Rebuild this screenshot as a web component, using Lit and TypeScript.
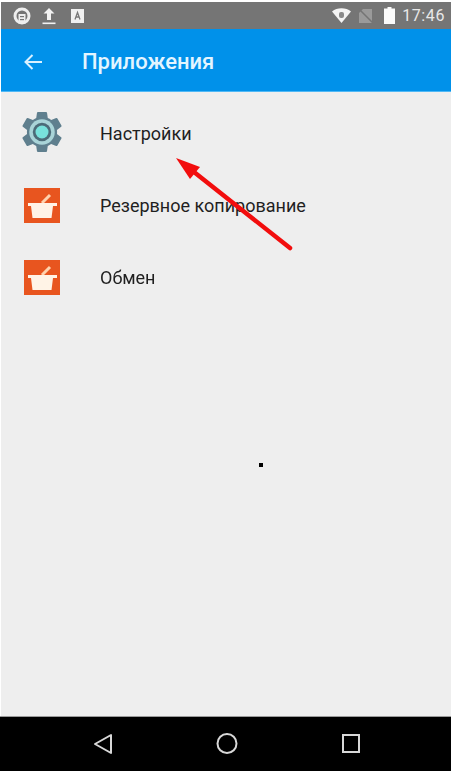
import { LitElement, html, css, svg } from "lit";
import { customElement } from "lit/decorators.js";

const gear = html`<svg width="44" height="44" viewBox="1.500 1.500 21 21">
  <path fill="#5f7f8e" d="M19.140 12.940c.04-.3.06-.61.06-.94 0-.32-.02-.64-.07-.94l2.030-1.580c.18-.14.23-.41.12-.61l-1.920-3.320c-.12-.22-.37-.29-.59-.22l-2.390.96c-.5-.38-1.030-.7-1.620-.94l-.36-2.540c-.04-.24-.24-.41-.48-.41h-3.840c-.24 0-.43.17-.47.41l-.36 2.540c-.59.24-1.130.57-1.620.94l-2.390-.96c-.22-.08-.47 0-.59.22L2.740 8.870c-.12.21-.08.47.12.61l2.030 1.580c-.05.3-.09.63-.09.94s.02.64.07.94l-2.030 1.580c-.18.14-.23.41-.12.61l1.920 3.320c.12.22.37.29.59.22l2.390-.96c.5.38 1.030.7 1.620.94l.36 2.540c.05.24.24.41.48.41h3.840c.24 0 .44-.17.47-.41l.36-2.540c.59-.24 1.130-.56 1.620-.94l2.390.96c.22.08.47 0 .59-.22l1.920-3.320c.12-.22.07-.47-.12-.61l-2.010-1.580z"/>
  <circle cx="12" cy="12" r="6.100" fill="#a9d4d8"/>
  <circle cx="12" cy="12" r="4.400" fill="#4c6b78"/>
  <circle cx="12" cy="12" r="3.100" fill="#78e2dc"/>
</svg>`;

const basket = html`<svg width="36" height="35" viewBox="0 0 36 35">
  <rect width="36" height="35" fill="#e8551f"/>
  <path d="M18 15 26 7" stroke="#ffd2ae" stroke-width="3" fill="none"/>
  <rect x="4" y="15" width="29" height="3" fill="#fff3e6"/>
  <path d="M7 18h22l-1.500 12H8.500z" fill="#fff3e6"/>
</svg>`;

const arrow = svg`
  <line x1="290" y1="248" x2="194" y2="172" stroke="#f20d0d" stroke-width="4.500" stroke-linecap="round"/>
  <polygon points="176,158 200,167 190,179" fill="#f20d0d"/>`;

@customElement("app-root")
export class AppRoot extends LitElement {
  static styles = css`
    :host { display: block; width: 451px; height: 771px; position: relative; background: #fff; overflow: hidden; font-family: Roboto, "Noto Sans", sans-serif; }
    .frame { height: 771px; display: flex; flex-direction: column; padding: 2px 0 0 1px; box-sizing: border-box; filter: blur(.45px); }
    .status { height: 27px; flex: none; background: #757575; display: flex; align-items: center; padding: 0 6px 0 12px; color: #eee; }
    .status .left { display: flex; align-items: center; flex: 1; }
    .status .right { display: flex; align-items: center; }
    .up { margin-left: 11px; }
    .letter { margin-left: 15px; }
    .sim { margin-left: 7px; }
    .batt { margin-left: 11px; }
    .time { font-size: 16px; margin-left: 7px; letter-spacing: .6px; color: #e8e8e8; }
    svg { display: block; flex: none; }
    .appbar { height: 63px; flex: none; background: #0091ea; border-bottom: 1px solid #4fb8f5; box-sizing: border-box; display: flex; align-items: center; color: #e3f5ff; padding-top: 3px; }
    .back { margin-left: 22px; }
    .title { margin-left: 39px; font-size: 22px; font-weight: 500; }
    .list { flex: 1; background: #eeeeee; padding-top: 5px; }
    .row { height: 72px; display: flex; align-items: center; padding-left: 23px; }
    .row .icon { width: 76px; flex: none; display: flex; }
    .gearicon { margin-left: -4px; margin-right: 4px; margin-top: -2px; }
    .label { font-size: 18px; color: #1f1f1f; }
    .nav { height: 55px; flex: none; background: #000; border-top: 1px solid #9a9a9a; box-sizing: border-box; margin-left: -1px; display: flex; align-items: center; justify-content: center; }
    .overlay { position: absolute; left: 0; top: 0; pointer-events: none; }
    .dot { position: absolute; left: 259px; top: 463px; width: 4px; height: 4px; background: #000; }
  `;

  render() {
    const rows: [string, unknown][] = [
      ["Настройки", html`<div class="gearicon">${gear}</div>`],
      ["Резервное копирование", basket],
      ["Обмен", basket],
    ];
    return html`
      <div class="frame">
        <div class="status">
          <div class="left">
            <svg width="18" height="18" viewBox="0 0 18 18">
              <circle cx="9" cy="9" r="7" fill="none" stroke="#eee" stroke-width="3"/>
              <rect x="5.500" y="7" width="7" height="9.500" fill="#eee"/>
              <rect x="7" y="9" width="4" height="1.200" fill="#777"/>
              <rect x="7" y="12" width="4" height="1.200" fill="#777"/>
            </svg>
            <svg class="up" width="14" height="18" viewBox="0 0 14 18">
              <path d="M7 1 12.500 6.500H9V13H5V6.500H1.500z" fill="#f2f2f2"/>
              <rect x="0.500" y="15.500" width="13" height="1.600" fill="#f2f2f2"/>
            </svg>
            <svg class="letter" width="13" height="14" viewBox="0 0 13 14">
              <rect width="13" height="14" fill="#f0f0f0"/>
              <path d="M4 10.500 6.500 3.500 9 10.500M5 8h3" fill="none" stroke="#777" stroke-width="1.300"/>
            </svg>
          </div>
          <div class="right">
            <svg width="19" height="15" viewBox="0 0 19 15">
              <path d="M0 3.500C5-.8 14-.8 19 3.500L9.500 15z" fill="#f4f4f4"/>
              <rect x="7" y="4" width="5" height="6" rx="2" fill="#8a8a8a"/>
            </svg>
            <svg class="sim" width="15" height="16" viewBox="0 0 15 16">
              <path d="M5 1h9v14H1V5z" fill="#9a9a9a"/>
              <path d="M1 1 15 15" stroke="#757575" stroke-width="1.500"/>
            </svg>
            <svg class="batt" width="11" height="17" viewBox="0 0 11 17">
              <path d="M3.500 0h4v1.500H11V17H0V1.500h3.500z" fill="#fafafa"/>
            </svg>
            <span class="time">17:46</span>
          </div>
        </div>
        <div class="appbar">
          <svg class="back" width="20" height="18" viewBox="0 0 20 18">
            <path d="M19 9H3M9.500 2 2.500 9l7 7" fill="none" stroke="#d9f1ff" stroke-width="2"/>
          </svg>
          <span class="title">Приложения</span>
        </div>
        <div class="list">
          ${rows.map(([label, icon]) => html`
            <div class="row"><div class="icon">${icon}</div><span class="label">${label}</span></div>
          `)}
        </div>
        <div class="nav">
          <svg width="451" height="54" viewBox="0 0 451 54">
            <path d="M95 27 111 18V36z" fill="none" stroke="#d8d8d8" stroke-width="2" stroke-linejoin="round"/>
            <circle cx="227" cy="26.500" r="9.500" fill="none" stroke="#d8d8d8" stroke-width="2"/>
            <rect x="343" y="18" width="16" height="17" fill="none" stroke="#d8d8d8" stroke-width="2"/>
          </svg>
        </div>
      </div>
      <svg class="overlay" width="451" height="771" viewBox="0 0 451 771">${arrow}</svg>
      <div class="dot"></div>
    `;
  }
}
